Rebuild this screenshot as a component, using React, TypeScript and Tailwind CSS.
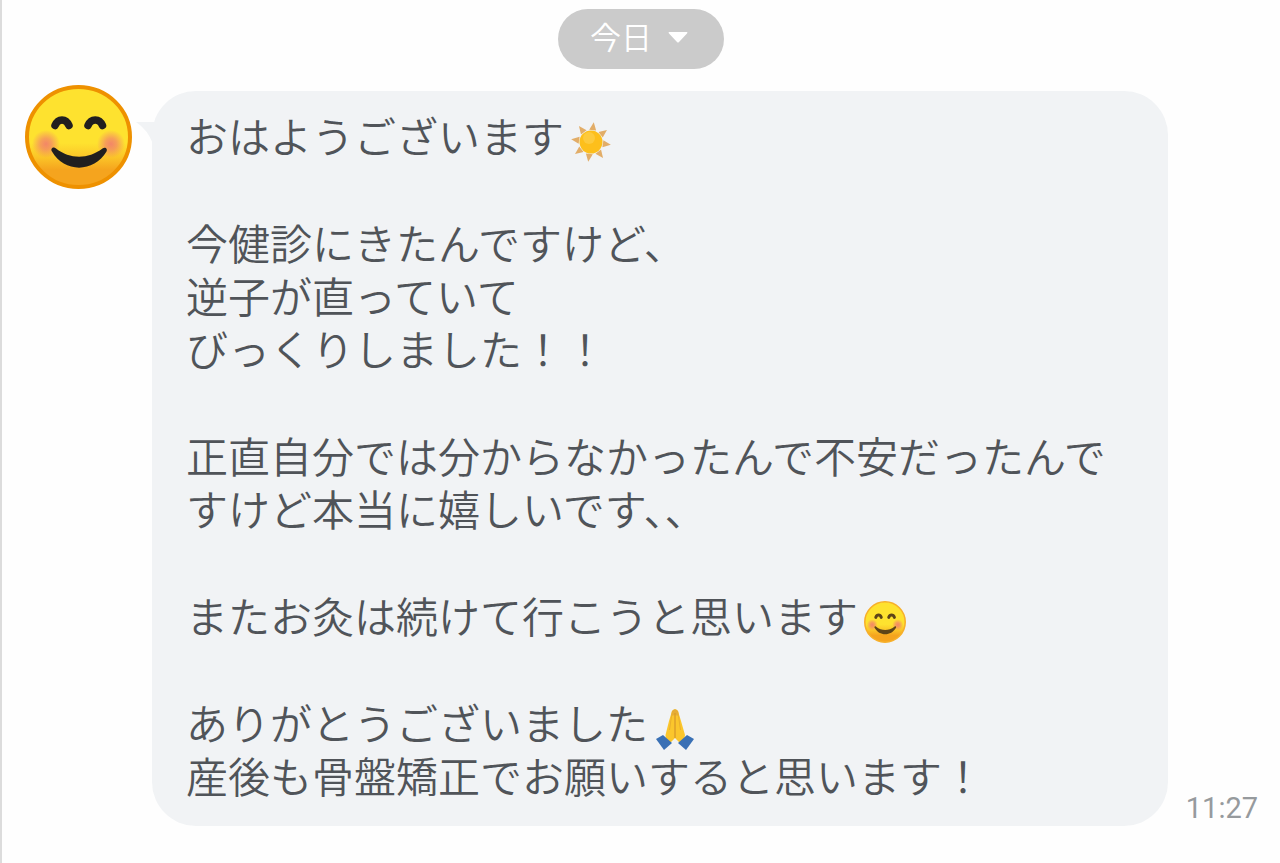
import type { ReactNode } from "react";

type FaceProps = { className: string; id: string; label: string; outline: string; ink: string };

function SmileFace({ className, id, label, outline, ink }: FaceProps) {
  return (
    <svg viewBox="1 0 107 104" preserveAspectRatio="none" className={className} role="img" aria-label={label}>
      <defs>
        <linearGradient id={`${id}-skin`} x1="0" y1="0" x2="0" y2="1">
          <stop offset="0" stopColor="#fee22f" />
          <stop offset="0.56" stopColor="#fee22f" />
          <stop offset="0.7" stopColor="#fbc528" />
          <stop offset="0.83" stopColor="#f5a41e" />
          <stop offset="1" stopColor="#f5a41e" />
        </linearGradient>
        <radialGradient id={`${id}-blush`}>
          <stop offset="0" stopColor="#f2826a" stopOpacity="0.95" />
          <stop offset="0.4" stopColor="#f2826a" stopOpacity="0.7" />
          <stop offset="1" stopColor="#f2826a" stopOpacity="0" />
        </radialGradient>
      </defs>
      <ellipse cx="54.5" cy="52" rx="51.5" ry="50" fill={`url(#${id}-skin)`} stroke={outline} strokeWidth="4" />
      <circle cx="22" cy="59" r="14" fill={`url(#${id}-blush)`} />
      <circle cx="87" cy="59" r="14" fill={`url(#${id}-blush)`} />
      <path
        d="M31 40.500 C34 33 42 33 45 40.500 M64 40.500 C67 33 75.500 33 78.500 40.500"
        fill="none"
        stroke={ink}
        strokeWidth="7.5"
        strokeLinecap="round"
      />
      <path
        d="M28 66.500 C26 63.500 29.500 61 32 63.500 C46 74.500 64 74.500 78.500 63.500 C81 61.500 84 63.500 82.500 66.500 C70 88 40 88 28 66.500Z"
        fill={ink}
      />
    </svg>
  );
}

function Sun() {
  return (
    <svg viewBox="0 0 42 42" className="h-full w-full" role="img" aria-label="太陽">
      <g fill="#e2ad68">
        {[8, 53, 98, 143, 188, 233, 278, 323].map((angle) => (
          <path key={angle} d="M21 1 L24.500 9 L17.500 9Z" transform={`rotate(${angle} 21 21)`} />
        ))}
      </g>
      <circle cx="21" cy="21" r="11.5" fill="#fdbf1b" />
      <circle cx="19" cy="17" r="6" fill="#fdca3c" />
    </svg>
  );
}

function Hands() {
  return (
    <svg viewBox="0 0 42 42" className="h-full w-full" role="img" aria-label="合掌">
      <path d="M18 3 Q21 -0.500 24 3 L27 13 L31 27 L30 32 L26 35 L21 30 L16 35 L12 32 L11.500 27 L15 13Z" fill="#fbc62c" />
      <path d="M18 3 Q21 -0.500 24 3 L25 8 L21 7 L17 8Z" fill="#e6ad35" />
      <path d="M21 5 V30" stroke="#dd9f2a" strokeWidth="1.500" fill="none" />
      <path d="M17.500 8 L15.500 22 M24.500 8 L26.500 22" stroke="#eab02c" strokeWidth="1" fill="none" />
      <path d="M2 31 L9 27 L18 35 L10 42Z" fill="#3a70b5" />
      <path d="M40 31 L33 27 L24 35 L32 42Z" fill="#3a70b5" />
    </svg>
  );
}

function Emoji({ children }: { children: ReactNode }) {
  return <span className="-my-2 ml-1.5 inline-block size-[42px] align-[-2px]">{children}</span>;
}

export default function App() {
  return (
    <main className="min-h-screen border-l-2 border-[#dcdcdc] bg-[#fefefe] pt-[9px] font-['Noto_Sans_CJK_JP','Noto_Sans',sans-serif]">
      <div className="flex justify-center">
        <button
          type="button"
          className="flex h-[60px] items-center gap-4 rounded-full bg-[#cbcbcb] pr-9 pl-8 text-[31px] leading-[31px] font-[350] text-white"
        >
          <span className="pb-2">今日</span>
          <svg viewBox="0 0 20 11" className="mb-1 h-[11px] w-5" aria-hidden="true">
            <path d="M1 0 H19 Q20 0.500 19 1.500 L11 10 Q10 11 9 10 L1 1.500 Q0 0.500 1 0Z" fill="#fff" />
          </svg>
        </button>
      </div>

      <article className="mt-[22px] flex pr-[22px] pl-[23px]" lang="ja">
        <div className="-mt-[6px] h-[104px] w-[107px] shrink-0">
          <SmileFace id="avatar" className="h-full w-full" label="プロフィール" outline="#ee9100" ink="#211f1f" />
        </div>
        <svg viewBox="0 0 24 22" className="mt-[31px] -mr-2 ml-1 h-[22px] w-6 shrink-0" aria-hidden="true">
          <path d="M0 0 H24 V22 H17 Q12 8 0 0Z" fill="#f1f3f5" />
        </svg>
        <div className="min-w-0 flex-1 rounded-[44px] bg-[#f1f3f5] pt-[17px] pr-[34px] pb-[25px] pl-[34px] text-[42px] leading-[53px] font-[350] text-[#505459]">
          <p>
            おはようございます
            <Emoji>
              <Sun />
            </Emoji>
          </p>
          <p className="mt-[54px]">
            今健診にきたんですけど、
            <br />
            逆子が直っていて
            <br />
            びっくりしました！！
          </p>
          <p className="mt-[54px]">正直自分では分からなかったんで不安だったんですけど本当に嬉しいです、、</p>
          <p className="mt-[54px]">
            またお灸は続けて行こうと思います
            <Emoji>
              <SmileFace id="inline" className="h-full w-full" label="笑顔" outline="#f7b02b" ink="#5d4418" />
            </Emoji>
          </p>
          <p className="mt-[54px]">
            ありがとうございました
            <Emoji>
              <Hands />
            </Emoji>
            <br />
            産後も骨盤矯正でお願いすると思います！
          </p>
        </div>
        <time className="ml-[18px] self-end font-[Roboto,sans-serif] text-[29px] leading-9 text-[#969a9d]">11:27</time>
      </article>
    </main>
  );
}
